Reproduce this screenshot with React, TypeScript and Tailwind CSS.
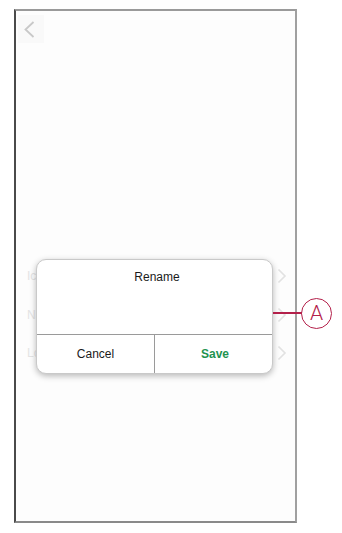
import React from 'react';

const rows = ['Icon', 'Name', 'Location'];

const Chevron = () => (
  <svg width="10" height="16" viewBox="0 0 10 16" fill="none">
    <path d="M1.5 1.5 L8 8 L1.5 14.5" stroke="#e2e2e2" strokeWidth="1.6" />
  </svg>
);

const App: React.FC = () => {
  return (
    <div className="relative w-[342px] h-[533px] bg-white overflow-hidden" style={{ fontFamily: '"Liberation Sans", Arial, sans-serif' }}>
      <div className="relative ml-[14px] mt-[9px] w-[283px] h-[514px] bg-[#fdfdfd] border-l-2 border-t-2 border-r-2 border-b-2 border-l-[#4a4a4a] border-t-[#9a9a9a] border-r-[#a0a0a0] border-b-[#8a8a8a]">
        {/* back */}
        <div className="ml-[2px] mt-[4px] w-[26px] h-[28px] flex items-center pl-[5px] bg-[#f9f9f9]">
          <svg width="12" height="17" viewBox="0 0 12 17" fill="none">
            <path d="M10.5 1 L2.5 8.5 L10.5 16" stroke="#c8c8c8" strokeWidth="1.8" />
          </svg>
        </div>

        {/* rows under dialog */}
        <div className="mt-[214px] flex flex-col">
          {rows.map((r) => (
            <div key={r} className="h-[38.5px] flex items-center justify-between pl-[11px] pr-[8px]">
              <span className="text-[12px] text-[#e4e4e4]">{r}</span>
              <Chevron />
            </div>
          ))}
        </div>

        {/* dialog */}
        <div className="absolute left-[20px] top-[248px] w-[237px] h-[115px] bg-white rounded-[10px] border border-[#c9c9c9] shadow-[0_2px_6px_rgba(0,0,0,0.28)] flex flex-col">
          <div className="h-[74px] flex justify-center pt-[8px] pl-[5px] text-[12px] text-[#1a1a1a]">Rename</div>
          <div className="flex-1 flex border-t border-[#9a9a9a]">
            <div className="w-[118px] flex items-center justify-center text-[12px] text-[#1a1a1a] border-r border-[#9a9a9a]">Cancel</div>
            <div className="flex-1 flex items-center justify-center pl-[3px] text-[12px] font-bold text-[#1f9350]">Save</div>
          </div>
        </div>
      </div>

      {/* callout A */}
      <div className="absolute left-[273px] top-[312px] w-[29px] h-[1.5px] bg-[#b3204a]" />
      <div className="absolute left-[301px] top-[298px] w-[31px] h-[31px] rounded-full border-[1.5px] border-[#b3204a] flex items-center justify-center text-[21px] text-[#b3204a] leading-none" style={{ fontFamily: 'Roboto, "Liberation Sans", sans-serif', fontWeight: 300 }}>
        A
      </div>
    </div>
  );
};

export default App;
